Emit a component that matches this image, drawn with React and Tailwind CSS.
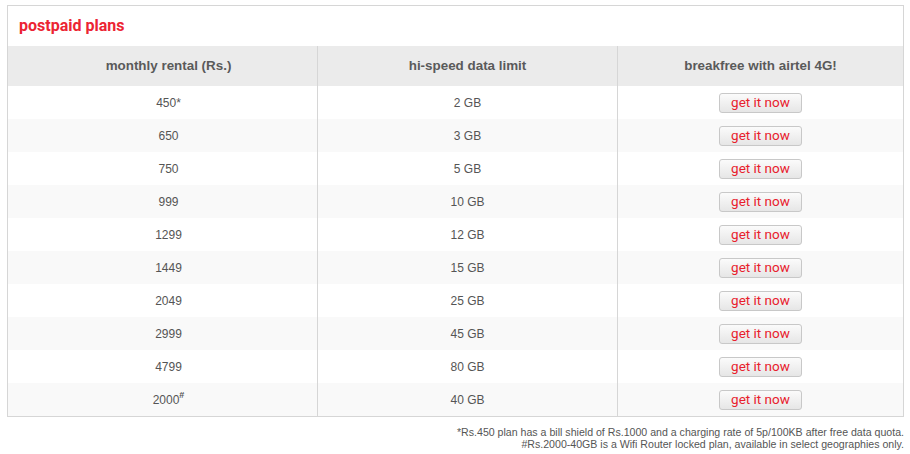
import React from "react";

const plans = [
  { rental: "450", mark: "*", data: "2 GB" },
  { rental: "650", data: "3 GB" },
  { rental: "750", data: "5 GB" },
  { rental: "999", data: "10 GB" },
  { rental: "1299", data: "12 GB" },
  { rental: "1449", data: "15 GB" },
  { rental: "2049", data: "25 GB" },
  { rental: "2999", data: "45 GB" },
  { rental: "4799", data: "80 GB" },
  { rental: "2000", sup: "#", data: "40 GB" },
];

const GetButton = () => (
  <button
    className="w-[83px] h-[20px] rounded-[3px] border border-[#c8c8c8] bg-gradient-to-b from-[#fbfbfb] to-[#e6e6e6] text-[13.5px] leading-none text-[#e8202c]"
    style={{ fontFamily: "Roboto, 'Noto Sans', sans-serif" }}
  >
    get it now
  </button>
);

export default function App() {
  return (
    <div
      className="w-[910px] h-[454px] bg-white pt-[5px] px-[7px]"
      style={{ fontFamily: "'Liberation Sans', Arial, sans-serif" }}
    >
      <div className="w-[897px] border border-[#d6d6d6]">
        <div
          className="h-[40px] pl-[11px] pt-[8px] text-[16px] font-bold text-[#ec2433]"
          style={{ fontFamily: "Roboto, 'Noto Sans', sans-serif" }}
        >
          postpaid plans
        </div>
        <div className="flex h-[40px] bg-[#ebebeb] text-[13.4px] font-bold text-[#5a5a5a]">
          <div className="w-[310px] pl-[12px] flex items-center justify-center border-r border-[#d6d6d6]">
            monthly rental (Rs.)
          </div>
          <div className="w-[300px] flex items-center justify-center border-r border-[#d6d6d6]">
            hi-speed data limit
          </div>
          <div className="flex-1 flex items-center justify-center">
            breakfree with airtel 4G!
          </div>
        </div>
        {plans.map((p, i) => (
          <div
            key={i}
            className={`flex h-[33px] text-[12px] text-[#555] ${
              i % 2 === 1 ? "bg-[#f9f9f9]" : "bg-white"
            }`}
          >
            <div className="w-[310px] pl-[12px] flex items-center justify-center border-r border-[#d6d6d6]">
              {p.rental}
              {p.mark}
              {p.sup && <sup className="text-[9px] font-bold -top-[5px]">{p.sup}</sup>}
            </div>
            <div className="w-[300px] flex items-center justify-center border-r border-[#d6d6d6]">
              {p.data}
            </div>
            <div className="flex-1 flex items-center justify-center">
              <GetButton />
            </div>
          </div>
        ))}
      </div>
      <div className="w-[897px] mt-[9px] text-right text-[10.6px] leading-[12px] text-[#555]">
        <p>*Rs.450 plan has a bill shield of Rs.1000 and a charging rate of 5p/100KB after free data quota.</p>
        <p>#Rs.2000-40GB is a Wifi Router locked plan, available in select geographies only.</p>
      </div>
    </div>
  );
}
